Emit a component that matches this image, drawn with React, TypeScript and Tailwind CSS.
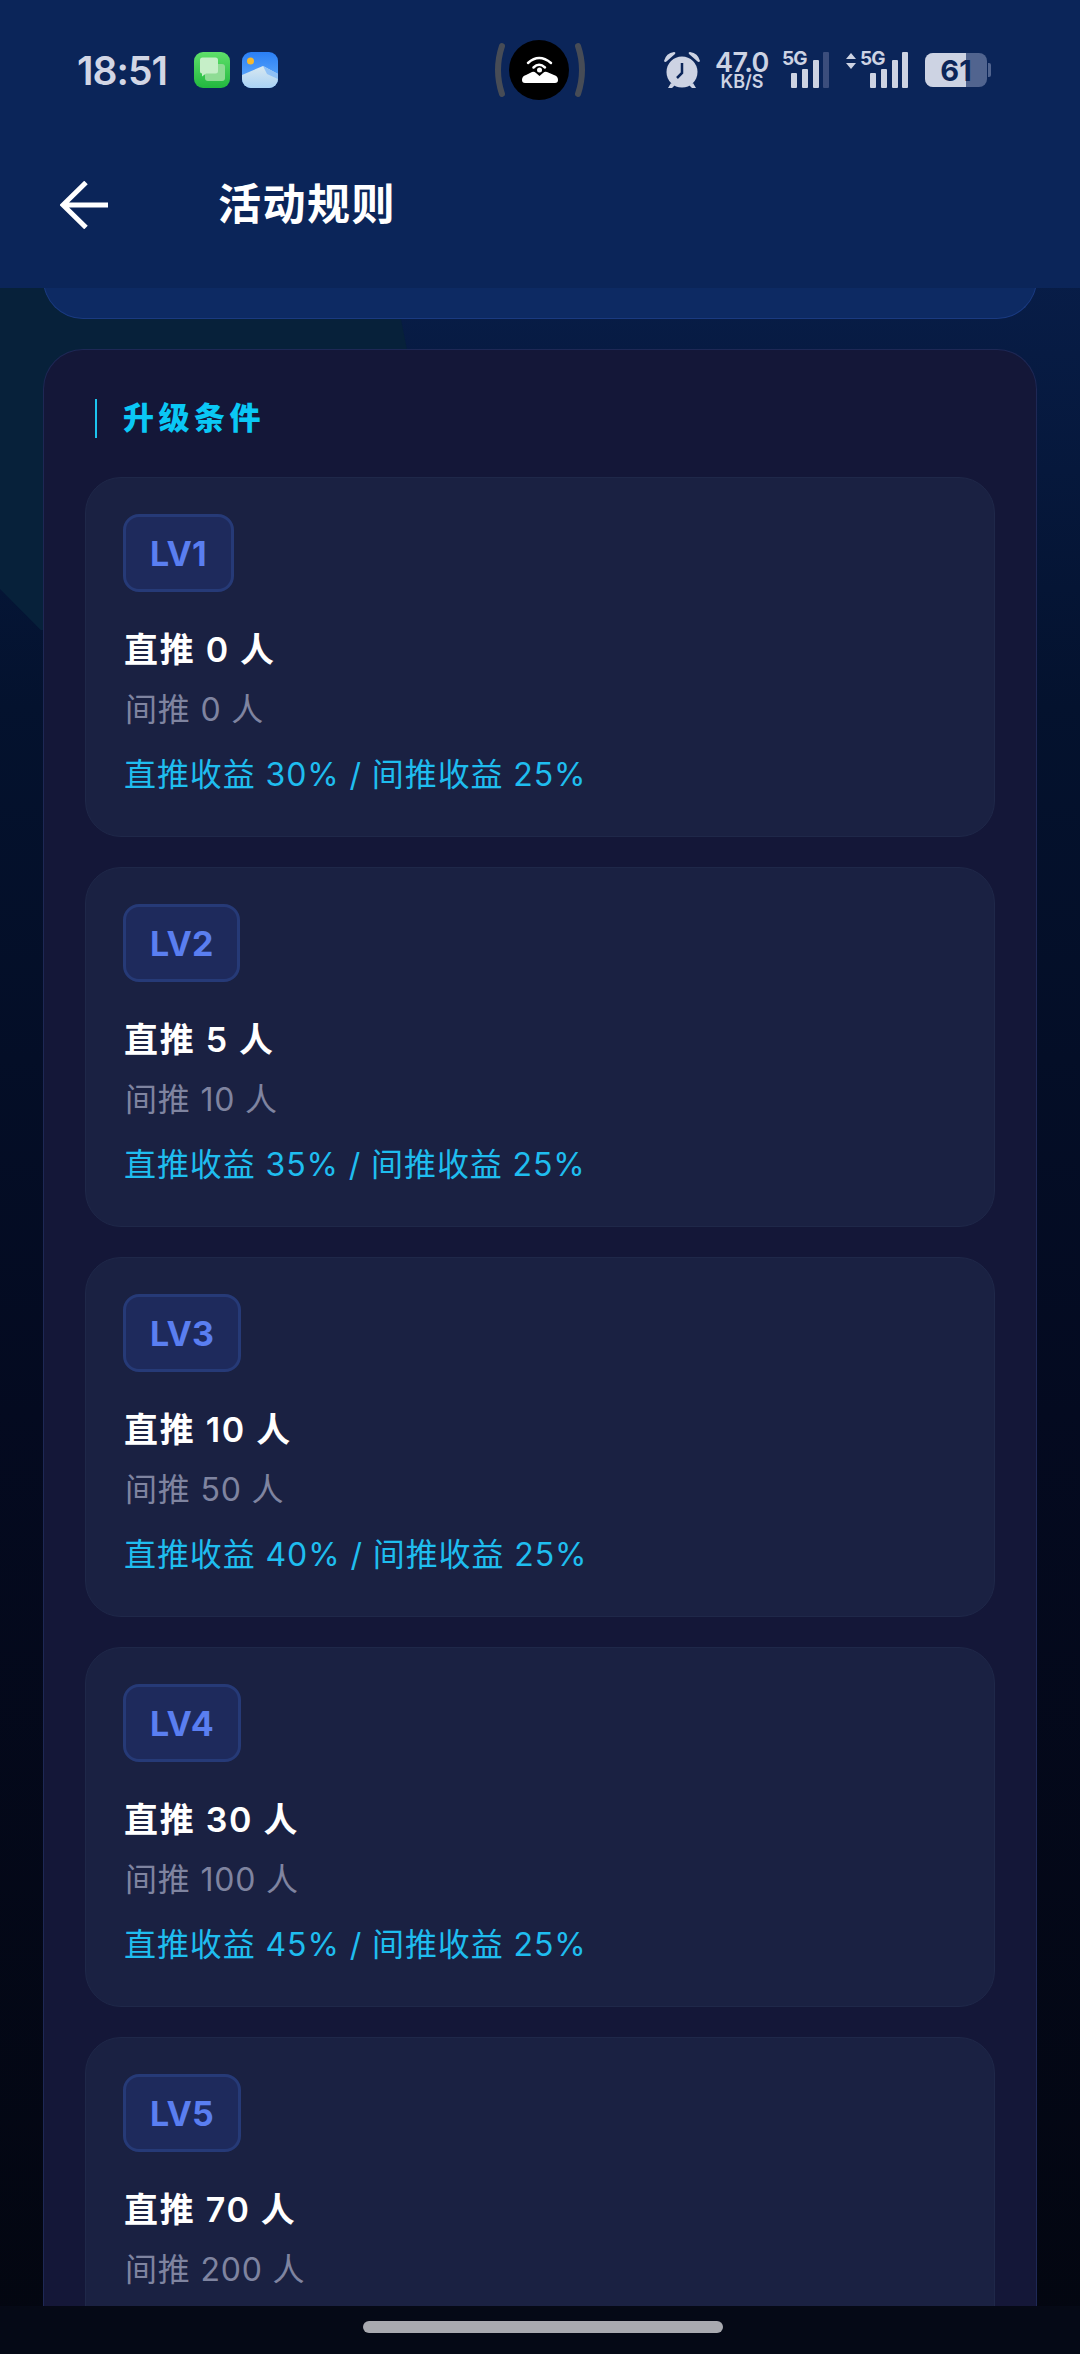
import React from 'react';

const levels = [
  { lv: 'LV1', direct: 0, indirect: 0, rate: 30 },
  { lv: 'LV2', direct: 5, indirect: 10, rate: 35 },
  { lv: 'LV3', direct: 10, indirect: 50, rate: 40 },
  { lv: 'LV4', direct: 30, indirect: 100, rate: 45 },
  { lv: 'LV5', direct: 70, indirect: 200, rate: 50 },
];

const font = "font-['Inter','Noto_Sans_CJK_SC',sans-serif]";

const SignalBars: React.FC<{ dimLast?: boolean }> = ({ dimLast }) => (
  <svg width="38" height="36" viewBox="0 0 38 36" className="block">
    <rect x="0" y="21" width="6" height="15" rx="1" fill="#cdd3e3" />
    <rect x="11" y="17" width="6" height="19" rx="1" fill="#cdd3e3" />
    <rect x="22" y="8" width="6" height="28" rx="1" fill="#cdd3e3" />
    <rect x="32" y="0" width="6" height="36" rx="1" fill={dimLast ? '#3b4d7c' : '#cdd3e3'} />
  </svg>
);

const StatusBar = () => (
  <div className="flex h-[140px] items-center pl-[77px] text-[#cdd3e3]">
    <span className="w-[117px] text-[39px] font-semibold leading-none tracking-[-1px] text-[#d2d6e5] font-['Inter',sans-serif]">18:51</span>
    <svg width="36" height="36" viewBox="0 0 36 36" className="block">
      <defs>
        <linearGradient id="msg" x1="0" y1="0" x2="0" y2="1">
          <stop offset="0" stopColor="#5fe06a" />
          <stop offset="1" stopColor="#22b83f" />
        </linearGradient>
      </defs>
      <rect width="36" height="36" rx="9" fill="url(#msg)" />
      <rect x="11" y="12" width="20" height="17" rx="3" fill="#8fdc95" />
      <path d="M6 8a2.500 2.500 0 0 1 2.500-2.500h13a2.500 2.500 0 0 1 2.500 2.500v11a2.500 2.500 0 0 1-2.500 2.500H12l-4 3v-3a2 2 0 0 1-2-2z" fill="#c6efc8" />
    </svg>
    <svg width="36" height="36" viewBox="0 0 36 36" className="ml-[12px] block">
      <defs>
        <linearGradient id="sky" x1="0" y1="0" x2="0" y2="1">
          <stop offset="0" stopColor="#2a7ff5" />
          <stop offset="1" stopColor="#6ab2fb" />
        </linearGradient>
        <linearGradient id="hill" x1="0" y1="0" x2="0" y2="1">
          <stop offset="0" stopColor="#d8e8f0" />
          <stop offset="1" stopColor="#a9d2f5" />
        </linearGradient>
      </defs>
      <rect width="36" height="36" rx="9" fill="url(#sky)" />
      <circle cx="8.500" cy="9" r="3.500" fill="#f5b82e" />
      <path d="M0 23 L21 14 L36 22 V27a9 9 0 0 1-9 9H9a9 9 0 0 1-9-9z" fill="url(#hill)" />
      <path d="M21 14 L36 22 V27 L25 22z" fill="#8fc1f7" />
    </svg>
    <svg width="92" height="60" viewBox="0 0 92 60" className="ml-[216px] block">
      <path d="M8 6 Q0 30 8 54" stroke="#474c56" strokeWidth="6" strokeLinecap="round" fill="none" />
      <path d="M84 6 Q92 30 84 54" stroke="#474c56" strokeWidth="6" strokeLinecap="round" fill="none" />
      <circle cx="45" cy="30" r="30" fill="#000" />
      <path d="M34 23 Q45 13 57 23" stroke="#fff" strokeWidth="2.500" strokeLinecap="round" fill="none" />
      <path d="M39.500 27.500 Q45 22 51 27.500" stroke="#fff" strokeWidth="2.500" strokeLinecap="round" fill="none" />
      <circle cx="45.500" cy="30" r="2.500" fill="#fff" />
      <path d="M28 40 Q28 36 32 35 L38 32 Q40 31 42 33 L45.500 36 L49 33 Q51 31 53 32 L60 35 Q64 36 64 40 Q64 43 61 43 H31 Q28 43 28 40z" fill="#fff" />
    </svg>
    <svg width="38" height="38" viewBox="0 0 38 38" className="ml-[77px] block">
      <circle cx="19" cy="21" r="15.500" fill="#cdd3e3" />
      <path d="M19 12v10l-5 5" stroke="#0b2559" strokeWidth="2.500" fill="none" />
      <path d="M1 10 Q3 2 11 1 Q13 1 12 3 L4 10 Q2 12 1 10z" fill="#cdd3e3" />
      <path d="M37 10 Q35 2 27 1 Q25 1 26 3 L34 10 Q36 12 37 10z" fill="#cdd3e3" />
      <path d="M8 32 l-3 5 h4 l3-3z M30 32 l3 5 h-4 l-3-3z" fill="#cdd3e3" />
    </svg>
    <div className={`ml-[14px] flex w-[54px] flex-col items-center font-semibold leading-none ${font}`}>
      <span className="text-[27px] leading-[22px] tracking-[-0.5px]">47.0</span>
      <span className="text-[18px] leading-[15px]">KB/S</span>
    </div>
    <div className="relative ml-[13px] h-[36px] w-[47px]">
      <span className={`absolute left-0 top-[-5px] text-[19px] font-bold leading-[24px] tracking-[-0.8px] text-[#cdd3e3] ${font}`}>5G</span>
      <div className="absolute right-0 bottom-0"><SignalBars dimLast /></div>
    </div>
    <svg width="10" height="16" viewBox="0 0 10 16" className="mb-[18px] ml-[17px] block">
      <path d="M5 0 L10 6 H0z M5 16 L0 10 H10z" fill="#cdd3e3" />
    </svg>
    <div className="relative ml-[4px] h-[36px] w-[48px]">
      <span className={`absolute left-0 top-[-5px] text-[19px] font-bold leading-[24px] tracking-[-0.8px] text-[#cdd3e3] ${font}`}>5G</span>
      <div className="absolute right-0 bottom-0"><SignalBars /></div>
    </div>
    <div className="relative ml-[17px] flex h-[34px] w-[62px] items-center justify-center overflow-hidden rounded-[8px] bg-[#51648f]">
      <div className="absolute inset-y-0 left-0 w-[41px] bg-[#cdd3e3]" />
      <span className={`relative text-[29px] font-bold leading-none text-[#0b2559] ${font}`}>61</span>
    </div>
    <div className="ml-[1px] h-[14px] w-[3px] rounded-r-[2px] bg-[#51648f]" />
  </div>
);

const LevelCard: React.FC<(typeof levels)[number]> = ({ lv, direct, indirect, rate }) => (
  <div className="h-[360px] shrink-0 rounded-[36px] border border-[#1f2849] bg-[#1a2142] px-[37px] pt-[36px]">
    <div className="flex h-[78px] w-fit items-center rounded-[16px] border-[3px] border-[#263a77] bg-[#1e2a5c] px-[24px] text-[34px] font-bold text-[#5a7ef0]">
      {lv}
    </div>
    <p className="mt-[38px] pl-[1px] text-[34px] font-semibold leading-[40px] tracking-[1.7px] text-white">直推 {direct} 人</p>
    <p className="mt-[19px] pl-[2px] text-[32px] font-normal leading-[42px] tracking-[0.8px] text-[#7f84a0]">间推 {indirect} 人</p>
    <p className="mt-[23px] pl-[1px] text-[32px] font-normal leading-[42px] tracking-[0.9px] text-[#1fbdef]">
      直推收益 {rate}% / 间推收益 25%
    </p>
  </div>
);

export default function App() {
  return (
    <div className={`relative flex h-[2354px] w-[1080px] flex-col overflow-hidden bg-[linear-gradient(to_bottom,#0a2458_0%,#04122e_30%,#040a20_60%,#030610_100%)] ${font}`}>
      <div className="absolute left-0 top-[288px] h-[342px] w-[407px] bg-[#07213a] [clip-path:polygon(0_0,97%_0,100%_18%,100%_100%,10%_100%,0_88%)]" />
      <header className="relative z-10 h-[288px] shrink-0 bg-[#0b2559]">
        <StatusBar />
        <div className="flex h-[126px] items-center pl-[60px] pt-[3px]">
          <svg width="48" height="48" viewBox="0 0 48 48" className="block">
            <path d="M48 24H3M26 1.500 3 24l23 22.500" stroke="#fff" strokeWidth="5" fill="none" />
          </svg>
          <h1 className="ml-[110px] text-[43px] font-bold leading-none tracking-[1.5px] text-white">活动规则</h1>
        </div>
      </header>

      <div className="relative flex min-h-0 flex-1 flex-col overflow-hidden px-[43px]">
        <div className="flex h-[31px] shrink-0 flex-col justify-end overflow-hidden">
          <div className="h-[71px] shrink-0 rounded-b-[40px] border border-t-0 border-[#1a3a80] bg-[#0d2a63]" />
        </div>
        <section className="mt-[30px] flex flex-1 flex-col rounded-t-[40px] border border-b-0 border-[#1e2855] bg-[#141738] px-[41px]">
          <div className="flex h-[127px] shrink-0 items-center pl-[10px] pt-[10px]">
            <div className="h-[39px] w-[2px] bg-[#1cc4ee]" />
            <h2 className="ml-[26px] text-[31px] font-black tracking-[4.5px] text-[#0ac8f5]">升级条件</h2>
          </div>
          <div className="flex flex-col gap-[30px]">
            {levels.map((level) => (
              <LevelCard key={level.lv} {...level} />
            ))}
          </div>
        </section>
      </div>

      <div className="relative flex h-[48px] shrink-0 justify-center bg-[#050916] pl-[6px] pt-[15px]">
        <div className="h-[12px] w-[360px] rounded-full bg-[#a9aab0]" />
      </div>
    </div>
  );
}
